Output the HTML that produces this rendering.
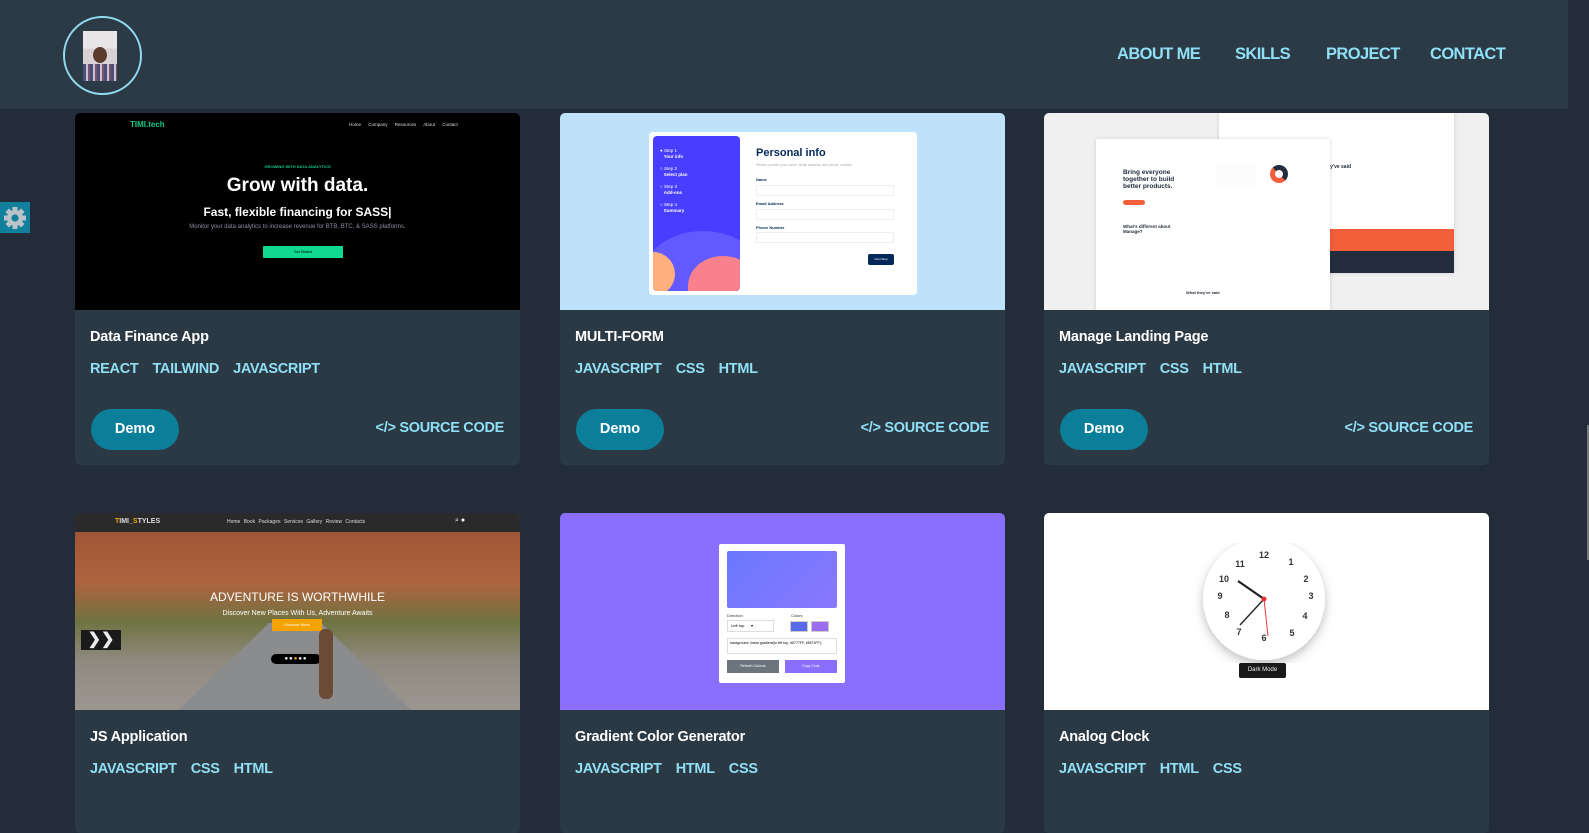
<!DOCTYPE html>
<html><head><meta charset="utf-8">
<style>
*{box-sizing:border-box;margin:0;padding:0}
body{width:1589px;height:812px;overflow:hidden;background:#222d39;font-family:"Liberation Sans",sans-serif;position:relative}
.hdr{position:absolute;left:0;top:0;width:1568px;height:109px;background:#2c3a46;z-index:5}
.avatar{position:absolute;left:63px;top:16px;width:79px;height:79px;border:2px solid #8fdcf0;border-radius:50%}
.avatar .ph{position:absolute;left:18px;top:13px;width:34px;height:50px;background:linear-gradient(#e9e6e8 0 35%,#d8d2d4 35%);}
.avatar .face{position:absolute;left:28px;top:29px;width:14px;height:16px;border-radius:50%;background:#5a3b2e}
.avatar .shirt{position:absolute;left:18px;top:46px;width:34px;height:17px;background:repeating-linear-gradient(90deg,#4b4f7a 0 3px,#c9c3d8 3px 5px,#7a5366 5px 7px)}
.nav{position:absolute;top:45px;font-weight:bold;font-size:16.5px;color:#8fdff5;letter-spacing:-0.6px}
.gear{position:absolute;left:0;top:202px;width:30px;height:31px;background:#12809c;z-index:6}
.card{position:absolute;width:445px;background:#2b3945;border-radius:5px;overflow:hidden}
.img{position:absolute;left:0;top:0;width:445px;height:197px;overflow:hidden}
.title{position:absolute;left:15px;top:216px;color:#fff;font-weight:bold;font-size:14.5px;letter-spacing:-0.2px}
.tags{position:absolute;left:15px;top:248px;color:#8fdff5;font-weight:bold;font-size:14.5px;letter-spacing:-0.3px;word-spacing:0}
.tags span{margin-right:14px}
.demo{position:absolute;left:16px;top:296px;width:88px;height:41px;border-radius:21px;background:#0b7f9a;color:#fff;font-weight:bold;font-size:14.5px;text-align:center;line-height:41px}
.src{position:absolute;right:16px;top:307px;color:#8fdff5;font-weight:bold;font-size:14.5px;letter-spacing:-0.3px}
.scroll{position:absolute;left:1568px;top:0;width:21px;height:812px;background:#222d39}
</style></head><body>
<div class="hdr">
  <div class="avatar"><div class="ph"></div><div class="face"></div><div class="shirt"></div></div>
  <div class="nav" style="left:1117px">ABOUT ME</div>
  <div class="nav" style="left:1235px">SKILLS</div>
  <div class="nav" style="left:1326px">PROJECT</div>
  <div class="nav" style="left:1430px">CONTACT</div>
</div>
<div class="gear"><svg width="30" height="31" viewBox="0 0 30 31"><g fill="#b9c3c8" transform="translate(15,16)"><circle r="8"/><g><rect x="-2.5" y="-11" width="5" height="22"/><rect x="-2.5" y="-11" width="5" height="22" transform="rotate(45)"/><rect x="-2.5" y="-11" width="5" height="22" transform="rotate(90)"/><rect x="-2.5" y="-11" width="5" height="22" transform="rotate(135)"/></g></g><circle cx="15" cy="16" r="3.6" fill="#12809c"/></svg></div>

<!-- Card 1 -->
<div class="card" style="left:75px;top:113px;height:352px">
 <div class="img" style="background:#000">
  <div style="position:absolute;left:55px;top:7px;color:#10c986;font-weight:bold;font-size:8px">TIMI.tech</div>
  <div style="position:absolute;left:274px;top:9px;color:#ddd;font-size:4.5px;word-spacing:6px">Home Company Resources About Contact</div>
  <div style="position:absolute;left:0;width:445px;top:51px;text-align:center;color:#10c986;font-size:4px;font-weight:bold">GROWING WITH DATA ANALYTICS</div>
  <div style="position:absolute;left:0;width:445px;top:62px;text-align:center;color:#fff;font-size:19px;font-weight:bold">Grow with data.</div>
  <div style="position:absolute;left:0;width:445px;top:92px;text-align:center;color:#fff;font-size:12px;font-weight:bold">Fast, flexible financing for SASS|</div>
  <div style="position:absolute;left:105px;width:235px;top:110px;text-align:center;color:#8a8fa0;font-size:6px;line-height:8px">Monitor your data analytics to increase revenue for BTB, BTC, &amp; SASS platforms.</div>
  <div style="position:absolute;left:188px;top:133px;width:80px;height:12px;background:#10d990;border-radius:1px;font-size:3.5px;text-align:center;line-height:12px">Get Started</div>
 </div>
 <div class="title">Data Finance App</div>
 <div class="tags"><span>REACT</span><span>TAILWIND</span><span>JAVASCRIPT</span></div>
 <div class="demo">Demo</div><div class="src">&lt;/&gt; SOURCE CODE</div>
</div>

<!-- Card 2 -->
<div class="card" style="left:560px;top:113px;height:352px">
 <div class="img" style="background:#bfe2fb">
  <div style="position:absolute;left:89px;top:19px;width:268px;height:163px;background:#fff;border-radius:4px"></div>
  <div style="position:absolute;left:93px;top:23px;width:87px;height:155px;background:#483eff;border-radius:4px;overflow:hidden">
   <div style="position:absolute;left:-10px;top:95px;width:120px;height:90px;background:#6259ff;border-radius:50%"></div>
   <div style="position:absolute;left:-22px;top:116px;width:44px;height:44px;background:#ffaf7e;border-radius:50%"></div>
   <div style="position:absolute;left:35px;top:120px;width:70px;height:60px;background:#f9818e;border-radius:50% 50% 0 0"></div>
   <div style="position:absolute;left:7px;top:12px;color:#fff;font-size:4.5px;line-height:6px"><b>●</b> Step 1<br>&nbsp;&nbsp;&nbsp;<b>Your info</b><br><br>○ Step 2<br>&nbsp;&nbsp;&nbsp;<b>Select plan</b><br><br>○ Step 3<br>&nbsp;&nbsp;&nbsp;<b>Add-ons</b><br><br>○ Step 4<br>&nbsp;&nbsp;&nbsp;<b>Summary</b></div>
  </div>
  <div style="position:absolute;left:196px;top:34px;color:#02295a;font-weight:bold;font-size:11px">Personal info</div>
  <div style="position:absolute;left:196px;top:50px;color:#aaa;font-size:3.5px">Please provide your name, email address, and phone number.</div>
  <div style="position:absolute;left:196px;top:64px;color:#02295a;font-size:4px;font-weight:bold">Name</div>
  <div style="position:absolute;left:196px;top:72px;width:138px;height:11px;border:1px solid #eee;border-radius:2px"></div>
  <div style="position:absolute;left:196px;top:88px;color:#02295a;font-size:4px;font-weight:bold">Email Address</div>
  <div style="position:absolute;left:196px;top:96px;width:138px;height:11px;border:1px solid #eee;border-radius:2px"></div>
  <div style="position:absolute;left:196px;top:112px;color:#02295a;font-size:4px;font-weight:bold">Phone Number</div>
  <div style="position:absolute;left:196px;top:119px;width:138px;height:11px;border:1px solid #eee;border-radius:2px"></div>
  <div style="position:absolute;left:308px;top:141px;width:26px;height:11px;background:#02295a;border-radius:2px;color:#fff;font-size:3px;text-align:center;line-height:11px">Next Step</div>
 </div>
 <div class="title">MULTI-FORM</div>
 <div class="tags"><span>JAVASCRIPT</span><span>CSS</span><span>HTML</span></div>
 <div class="demo">Demo</div><div class="src">&lt;/&gt; SOURCE CODE</div>
</div>

<!-- Card 3 -->
<div class="card" style="left:1044px;top:113px;height:352px">
 <div class="img" style="background:#f0f0f1">
  <div style="position:absolute;left:175px;top:0;width:235px;height:160px;background:#fff;box-shadow:0 0 4px rgba(0,0,0,.15)">
   <div style="position:absolute;left:0;top:116px;width:235px;height:22px;background:#f25f3a"></div>
   <div style="position:absolute;left:0;top:138px;width:235px;height:22px;background:#242d3d"></div>
   <div style="position:absolute;left:90px;top:51px;color:#242d3d;font-size:5px;font-weight:bold">What they've said</div>
  </div>
  <div style="position:absolute;left:52px;top:26px;width:234px;height:172px;background:#fff;box-shadow:0 0 4px rgba(0,0,0,.15)">
   <div style="position:absolute;left:27px;top:30px;color:#242d3d;font-size:6.5px;font-weight:bold;line-height:7px">Bring everyone<br>together to build<br>better products.</div>
   <div style="position:absolute;left:27px;top:61px;width:22px;height:5px;background:#f25f3a;border-radius:3px"></div>
   <div style="position:absolute;left:120px;top:24px;width:40px;height:22px;background:#fbfbfb"></div>
   <div style="position:absolute;left:172px;top:24px;width:25px;height:22px;"><div style="width:18px;height:18px;border:5px solid #242d3d;border-bottom-color:#f25f3a;border-left-color:#f25f3a;border-radius:50%;margin:2px"></div></div>
   <div style="position:absolute;left:27px;top:85px;color:#242d3d;font-size:4.5px;font-weight:bold">What's different about<br>Manage?</div>
   <div style="position:absolute;left:90px;top:151px;color:#242d3d;font-size:4px;font-weight:bold">What they've said</div>
  </div>
 </div>
 <div class="title">Manage Landing Page</div>
 <div class="tags"><span>JAVASCRIPT</span><span>CSS</span><span>HTML</span></div>
 <div class="demo">Demo</div><div class="src">&lt;/&gt; SOURCE CODE</div>
</div>

<!-- Card 4 -->
<div class="card" style="left:75px;top:513px;height:320px">
 <div class="img" style="background:linear-gradient(180deg,#9a5034 0%,#b0633f 35%,#6f7340 55%,#8f8a80 75%,#9b9690 100%)">
  <div style="position:absolute;left:90px;top:110px;width:260px;height:100px;background:#8a8c8e;clip-path:polygon(40% 0,60% 0,100% 100%,0 100%)"></div>
  <div style="position:absolute;left:0;top:0;width:445px;height:19px;background:#2a2a2a"></div>
  <div style="position:absolute;left:40px;top:5px;color:#ddd;font-size:7px;font-weight:bold"><span style="color:#f0a800">T</span>IMI_<span style="color:#f0a800">S</span>TYLES</div>
  <div style="position:absolute;left:152px;top:6px;color:#ddd;font-size:5px;word-spacing:2px">Home Book Packages Services Gallery Review Contacts</div>
  <div style="position:absolute;left:380px;top:4px;color:#fff;font-size:7px">⌕ ●</div>
  <div style="position:absolute;left:0;width:445px;top:77px;text-align:center;color:#fff;font-size:12px">ADVENTURE IS WORTHWHILE</div>
  <div style="position:absolute;left:0;width:445px;top:97px;text-align:center;color:#fff;font-size:7px">Discover New Places With Us, Adventure Awaits</div>
  <div style="position:absolute;left:197px;top:106px;width:50px;height:12px;background:#f4a300;font-size:4px;color:#fff;text-align:center;line-height:12px">Discover More</div>
  <div style="position:absolute;left:196px;top:141px;width:50px;height:10px;background:#000;border-radius:5px;color:#fff;font-size:6px;line-height:10px;text-align:center;letter-spacing:1px">●●<span style="color:#f4a300">●</span>●●</div>
  <div style="position:absolute;left:6px;top:117px;width:40px;height:20px;background:#1a1a1a;color:#eee;font-size:16px;line-height:20px;font-weight:bold;text-align:center">❯❯</div>
  <div style="position:absolute;left:244px;top:116px;width:14px;height:70px;background:#6b4a36;border-radius:6px"></div>
 </div>
 <div class="title">JS Application</div>
 <div class="tags"><span>JAVASCRIPT</span><span>CSS</span><span>HTML</span></div>
</div>

<!-- Card 5 -->
<div class="card" style="left:560px;top:513px;height:320px">
 <div class="img" style="background:#8a6efe">
  <div style="position:absolute;left:159px;top:31px;width:126px;height:139px;background:#fff;border-radius:2px"></div>
  <div style="position:absolute;left:167px;top:38px;width:110px;height:57px;background:linear-gradient(135deg,#6a78fd,#8a78fd);border-radius:2px"></div>
  <div style="position:absolute;left:167px;top:100px;font-size:4px;color:#333">Direction</div>
  <div style="position:absolute;left:231px;top:100px;font-size:4px;color:#333">Colors</div>
  <div style="position:absolute;left:167px;top:107px;width:47px;height:12px;border:1px solid #ddd;font-size:4px;line-height:10px;padding-left:3px">Left top &nbsp;&nbsp;&nbsp;&nbsp;&nbsp;▾</div>
  <div style="position:absolute;left:230px;top:108px;width:18px;height:11px;background:#5a6be9;border:1px solid #ccc"></div>
  <div style="position:absolute;left:251px;top:108px;width:18px;height:11px;background:#9b6ef0;border:1px solid #ccc"></div>
  <div style="position:absolute;left:167px;top:125px;width:110px;height:16px;border:1px solid #ddd;font-size:3.5px;padding:2px">background: linear-gradient(to left top, #6777FF, #8971FF);</div>
  <div style="position:absolute;left:167px;top:147px;width:52px;height:13px;background:#6c757d;color:#fff;font-size:3.5px;text-align:center;line-height:13px">Refresh Colours</div>
  <div style="position:absolute;left:225px;top:147px;width:52px;height:13px;background:#8a6efe;color:#fff;font-size:3.5px;text-align:center;line-height:13px">Copy Code</div>
 </div>
 <div class="title">Gradient Color Generator</div>
 <div class="tags"><span>JAVASCRIPT</span><span>HTML</span><span>CSS</span></div>
</div>

<!-- Card 6 -->
<div class="card" style="left:1044px;top:513px;height:320px">
 <div class="img" style="background:#fff">
  <svg style="position:absolute;left:150px;top:30px" width="140" height="120" viewBox="0 0 140 120">
   <defs><filter id="sh"><feDropShadow dx="0" dy="4" stdDeviation="5" flood-opacity="0.25"/></filter></defs>
   <circle cx="70" cy="56" r="61" fill="#fff" filter="url(#sh)"/>
   <g font-family="Liberation Sans" font-size="9" font-weight="bold" fill="#333" text-anchor="middle">
    <text x="70" y="15">12</text><text x="97" y="22">1</text><text x="112" y="39">2</text><text x="117" y="56">3</text><text x="111" y="76">4</text><text x="98" y="93">5</text><text x="70" y="98">6</text><text x="45" y="92">7</text><text x="33" y="75">8</text><text x="26" y="56">9</text><text x="30" y="39">10</text><text x="46" y="24">11</text>
   </g>
   <line x1="70" y1="56" x2="44" y2="38" stroke="#222" stroke-width="2.2"/>
   <line x1="70" y1="56" x2="46" y2="82" stroke="#222" stroke-width="1.4"/>
   <line x1="70" y1="56" x2="74" y2="93" stroke="#e33" stroke-width="1"/>
   <circle cx="70" cy="56" r="2.5" fill="#e33"/>
  </svg>
  <div style="position:absolute;left:195px;top:150px;width:47px;height:15px;background:#1a1a1a;border-radius:2px;color:#eee;font-size:6px;text-align:center;line-height:15px">Dark Mode</div>
 </div>
 <div class="title">Analog Clock</div>
 <div class="tags"><span>JAVASCRIPT</span><span>HTML</span><span>CSS</span></div>
</div>

<div class="scroll"><div style="position:absolute;left:19px;top:425px;width:2px;height:135px;background:#777"></div></div>
</body></html>
